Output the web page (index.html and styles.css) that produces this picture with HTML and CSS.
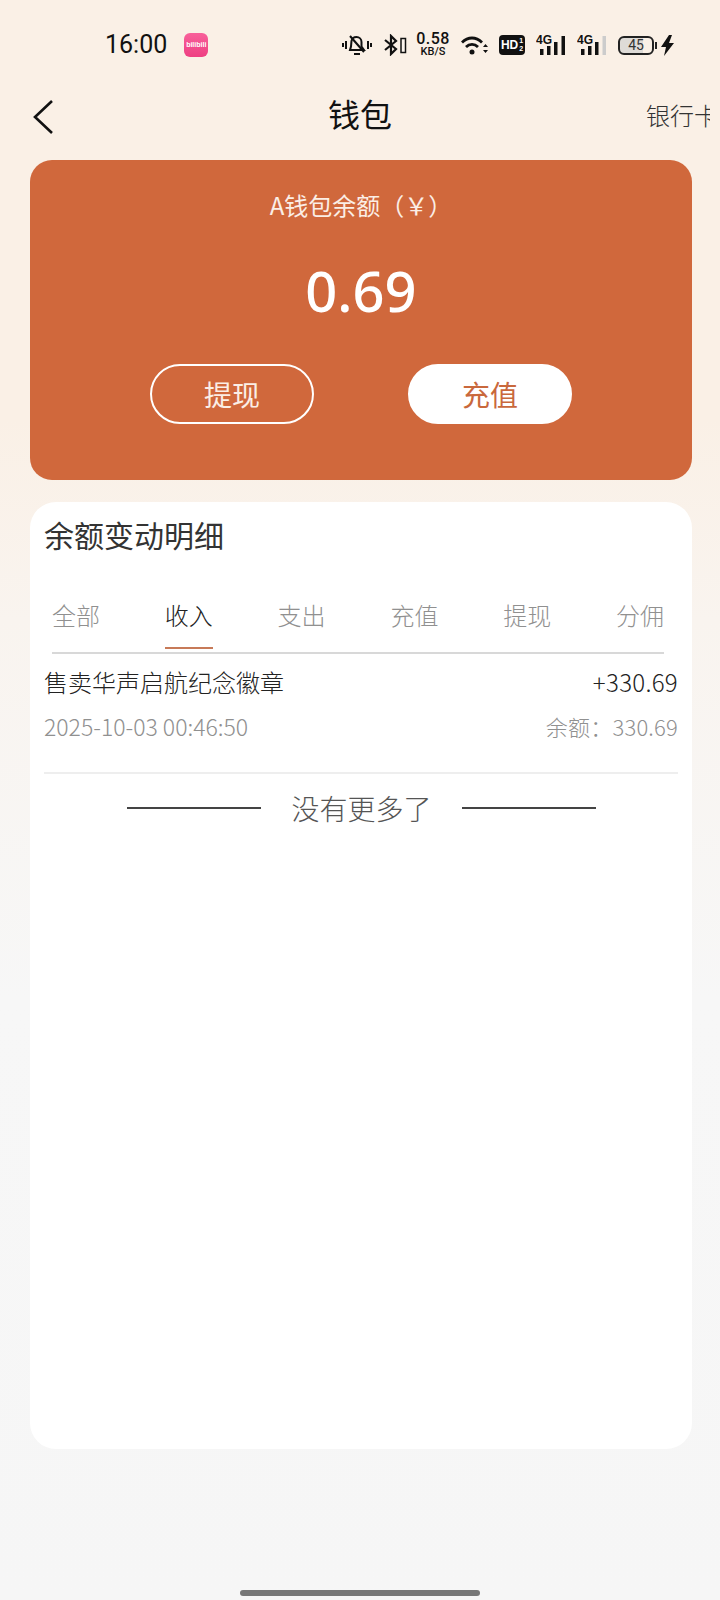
FILE: index.html
```html
<!DOCTYPE html>
<html lang="zh-CN">
<head>
<meta charset="utf-8">
<title>钱包</title>
<link rel="stylesheet" href="styles.css">
</head>
<body>
<div class="page">
  <div class="status">
    <div class="status-left">
      <span class="clock">16:00</span>
      <span class="app-badge">bilibili</span>
    </div>
    <div class="status-right">
      <svg class="ic-bell" width="30" height="24" viewBox="1 0 30 24"><g fill="none" stroke="#111" stroke-width="2"><path d="M9 17h14l-2.500-3.500V9a5 5 0 0 0-5-5c-2.500 0-4.500 1.500-5 4l-.5 5.500z"/><path d="M13 21h6"/><path d="M9 3l14 16"/></g><g fill="#111"><rect x="1" y="10" width="2" height="4"/><rect x="4" y="8" width="2" height="8"/><rect x="26" y="8" width="2" height="8"/><rect x="29" y="10" width="2" height="4"/></g></svg>
      <svg class="ic-bt" width="24" height="22" viewBox="0 0 24 22"><path d="M2 6l11 9-5 5V2l5 5L2 16" fill="none" stroke="#111" stroke-width="2.200"/><rect x="18" y="4.500" width="4.500" height="14" fill="#fff" fill-opacity=".3" stroke="#111" stroke-width="1.500"/></svg>
      <div class="speed"><span class="speed-num">0.58</span><span class="speed-unit">KB/S</span></div>
      <svg class="ic-wifi" width="27" height="20" viewBox="0 0 27 20"><g fill="none" stroke="#111" stroke-width="2.800"><path d="M1 7.500c6-6 14-6 20 0"/><path d="M5 12c3.500-3.500 8.500-3.500 12 0"/></g><circle cx="11" cy="17" r="2.500" fill="#111"/><path d="M22 12l2.500-3 2.500 3zM22 15l2.500 3 2.500-3z" fill="#111"/></svg>
      <div class="hd"><span class="hd-t">HD</span><span class="hd-n">1<br>2</span></div>
      <svg class="ic-sig" width="30" height="22" viewBox="0 0 30 22"><text x="0" y="10" class="sig-t">4G</text><rect x="4" y="15" width="3.500" height="6" fill="#111"/><rect x="11" y="12" width="3.500" height="9" fill="#111"/><rect x="18" y="8" width="3.500" height="13" fill="#111"/><rect x="25.500" y="2" width="3.500" height="19" fill="#111"/></svg>
      <svg class="ic-sig" width="30" height="22" viewBox="0 0 30 22"><text x="0" y="10" class="sig-t">4G</text><rect x="4" y="15" width="3.500" height="6" fill="#111"/><rect x="11" y="12" width="3.500" height="9" fill="#111"/><rect x="18" y="8" width="3.500" height="13" fill="#111"/><rect x="25.500" y="2" width="3.500" height="19" fill="#ccc"/></svg>
      <div class="batt"><span class="batt-body"><span class="batt-num">45</span></span><span class="batt-tip"></span></div>
      <svg class="ic-bolt" width="14" height="21" viewBox="0 0 14 21"><path d="M8 0L0 12h5L3 21l10-13H8l3-8z" fill="#111"/></svg>
    </div>
  </div>

  <div class="nav">
    <svg class="back" width="22" height="36" viewBox="0 0 22 36"><path d="M20 2L3 18l17 16" fill="none" stroke="#111" stroke-width="2.600"/></svg>
    <h1 class="nav-title">钱包</h1>
    <span class="nav-link">银行卡</span>
  </div>

  <section class="balance">
    <div class="balance-label">A钱包余额（￥）</div>
    <div class="balance-num">0.69</div>
    <div class="balance-btns">
      <span class="btn btn-out">提现</span>
      <span class="btn btn-fill">充值</span>
    </div>
  </section>

  <section class="detail">
    <h2 class="detail-title">余额变动明细</h2>
    <div class="tabs">
      <span class="tab">全部</span>
      <span class="tab tab-on">收入</span>
      <span class="tab">支出</span>
      <span class="tab">充值</span>
      <span class="tab">提现</span>
      <span class="tab">分佣</span>
    </div>
    <div class="row">
      <div class="row-line">
        <span class="row-name">售卖华声启航纪念徽章</span>
        <span class="row-amt">+330.69</span>
      </div>
      <div class="row-line row-sub">
        <span>2025-10-03 00:46:50</span>
        <span class="row-bal">余额：330.69</span>
      </div>
    </div>
    <div class="nomore"><span class="rule"></span><span class="nomore-t">没有更多了</span><span class="rule"></span></div>
  </section>

  <div class="home"></div>
</div>
</body>
</html>
```
FILE: styles.css
```css
* { box-sizing: border-box; }
html, body { margin: 0; padding: 0; }
body { font-family: "Noto Sans CJK SC", "Noto Sans", sans-serif; font-weight: 300; color: #222; }
.page {
  width: 720px; height: 1600px; overflow: hidden;
  display: flex; flex-direction: column; align-items: center;
  background: linear-gradient(180deg, #faf0e6 0, #faf0e6 420px, #f9f4ef 620px, #f7f7f7 1000px, #f6f6f6 100%);
}
.status {
  width: 100%; height: 88px; padding: 2px 0 0 105px;
  display: flex; justify-content: space-between; align-items: center;
}
.status-left { display: flex; align-items: center; gap: 17px; }
.clock { font: 400 25px/30px Roboto, sans-serif; color: #111; }
.app-badge {
  width: 24px; height: 24px; border-radius: 6px; overflow: hidden;
  background: linear-gradient(180deg, #f8609a, #ee3f82);
  color: #fff; font: 700 7px/24px "Liberation Sans", sans-serif; text-align: center;
}
.status-right { display: flex; align-items: center; height: 30px; gap: 11px; margin-right: 45px; }
.speed { display: flex; flex-direction: column; align-items: center; width: 34px; color: #111; font-family: Roboto, sans-serif; margin-left: -2px; }
.speed-num { font-size: 16px; line-height: 14px; font-weight: 500; letter-spacing: .4px; }
.speed-unit { font-size: 11px; line-height: 12px; font-weight: 500; }
.hd {
  width: 26px; height: 20px; border-radius: 4px; background: #111; color: #fff;
  display: flex; align-items: center; justify-content: center; gap: 1px;
  font-family: "Liberation Sans", sans-serif; font-weight: 700;
}
.hd-t { font-size: 12px; }
.hd-n { font-size: 7px; line-height: 8px; }
.sig-t { font: 700 12px "Liberation Sans", sans-serif; fill: #111; }
.batt { display: flex; align-items: center; gap: 1px; }
.batt-body {
  width: 36px; height: 19px; border: 2px solid #222; border-radius: 6px;
  background: linear-gradient(90deg, #dedbd7 72%, transparent 72%);
  display: flex; align-items: center; justify-content: center;
}
.batt-num { font: 400 14px/15px Roboto, sans-serif; color: #333; }
.batt-tip { width: 2px; height: 7px; background: #222; }
.ic-bolt { margin-left: -7px; }

.nav { width: 100%; height: 72px; position: relative; display: flex; align-items: flex-start; justify-content: center; }
.back { position: absolute; left: 32px; top: 11px; }
.nav-title { margin: 0; font-size: 32px; font-weight: 400; line-height: 50px; color: #111; }
.nav-link { position: absolute; left: 646px; width: 64px; top: 9px; height: 36px; overflow: hidden; white-space: nowrap; font-size: 24px; line-height: 36px; color: #333; }

.balance {
  width: 662px; height: 320px; flex: none; margin-left: 2px; border-radius: 22px; background: #d0683c; color: #fff;
  display: flex; flex-direction: column; align-items: center; padding-top: 27px;
}
.balance-label { font-size: 24px; font-weight: 400; line-height: 36px; color: #fbeee6; }
.balance-num { font: 500 56px/70px "Noto Sans", sans-serif; margin-top: 32px; }
.balance-btns { display: flex; gap: 94px; margin-top: 39px; }
.btn { width: 164px; height: 60px; border-radius: 30px; font-size: 28px; font-weight: 400; line-height: 56px; text-align: center; }
.btn-out { border: 2px solid #fff; color: #fbeee6; }
.btn-fill { border: 2px solid #fff; background: #fff; color: #c9683c; }

.detail {
  width: 662px; height: 947px; flex: none; margin: 22px 0 0 2px; border-radius: 26px; background: #fff;
  padding: 10px 14px 0 14px;
}
.detail-title { margin: 0; font-size: 30px; font-weight: 400; line-height: 44px; color: #333; }
.tabs {
  margin: 41px 14px 0 8px; display: flex; justify-content: space-between;
  padding-bottom: 3px; border-bottom: 2px solid #d8d8d8;
}
.tab { font-size: 24px; line-height: 36px; color: #909090; padding-bottom: 14px; border-bottom: 2px solid transparent; }
.tab-on { color: #222; border-bottom-color: #c77a58; }
.row { padding: 6px 0 0; height: 120px; border-bottom: 2px solid #eee; }
.row-line { display: flex; justify-content: space-between; align-items: center; }
.row-name, .row-amt { font-size: 24px; line-height: 44px; color: #222; }
.row-amt { letter-spacing: .3px; }
.row-sub { color: #909090; font-size: 23px; line-height: 44px; }
.row-bal { font-size: 22px; letter-spacing: .2px; }
.nomore { display: flex; justify-content: center; align-items: center; gap: 30px; margin: 12px 0 0 1px; }
.nomore-t { font-size: 28px; line-height: 44px; color: #555; }
.rule { width: 134px; height: 2px; background: #444; }
.home { width: 240px; height: 6px; border-radius: 3px; background: #777; margin-top: 141px; flex: none; }
```
